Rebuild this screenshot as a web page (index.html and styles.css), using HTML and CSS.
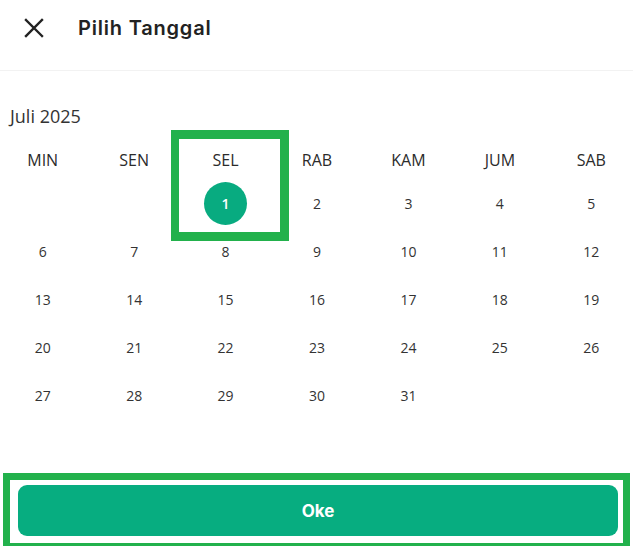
FILE: index.html
```html
<!DOCTYPE html>
<html lang="id">
<head>
<meta charset="utf-8">
<title>Pilih Tanggal</title>
<link rel="stylesheet" href="styles.css">
</head>
<body>
<div class="sheet">
  <header class="topbar">
    <button class="close" aria-label="Tutup">
      <svg width="20" height="20" viewBox="0 0 20 20"><path d="M2 2L18 18M18 2L2 18" stroke="#222" stroke-width="2.4" stroke-linecap="square" fill="none"/></svg>
    </button>
    <h1 class="title">Pilih Tanggal</h1>
  </header>
  <main class="cal">
    <div class="month">Juli 2025</div>
    <div class="grid">
      <div class="wd">MIN</div><div class="wd">SEN</div><div class="wd sel-col">SEL<span class="mark"></span></div><div class="wd">RAB</div><div class="wd">KAM</div><div class="wd">JUM</div><div class="wd">SAB</div>
      <div class="d"></div><div class="d"></div><div class="d"><span class="chosen">1</span></div><div class="d">2</div><div class="d">3</div><div class="d">4</div><div class="d">5</div>
      <div class="d">6</div><div class="d">7</div><div class="d">8</div><div class="d">9</div><div class="d">10</div><div class="d">11</div><div class="d">12</div>
      <div class="d">13</div><div class="d">14</div><div class="d">15</div><div class="d">16</div><div class="d">17</div><div class="d">18</div><div class="d">19</div>
      <div class="d">20</div><div class="d">21</div><div class="d">22</div><div class="d">23</div><div class="d">24</div><div class="d">25</div><div class="d">26</div>
      <div class="d">27</div><div class="d">28</div><div class="d">29</div><div class="d">30</div><div class="d">31</div><div class="d"></div><div class="d"></div>
    </div>
  </main>
  <footer class="foot">
    <span class="foot-mark"></span>
    <button class="ok">Oke</button>
  </footer>
</div>
</body>
</html>
```

FILE: styles.css
```css
* { box-sizing: border-box; }
html, body { margin: 0; padding: 0; background: #fff; }
body { width: 633px; height: 546px; overflow: hidden; }
.sheet { width: 633px; height: 546px; display: flex; flex-direction: column; }
.topbar {
  height: 71px;
  display: flex;
  align-items: center;
  padding: 0 0 14px 24px;
  border-bottom: 1px solid #f2f2f2;
}
.close {
  border: 0; background: none; padding: 0; margin: 0;
  width: 20px; height: 20px; display: block;
}
.close svg { display: block; }
.title {
  margin: 0 0 0 34px;
  font-family: Inter, "Noto Sans", sans-serif;
  font-size: 20px;
  font-weight: 600;
  color: #222;
  letter-spacing: 0.8px;
}
.cal { flex: 1; padding-top: 33px; }
.month {
  font-family: "Open Sans", "Noto Sans", sans-serif;
  font-size: 18px;
  color: #333;
  padding-left: 10px;
  line-height: 24px;
}
.grid {
  margin: 13px 0 0 -3px;
  width: 640px;
  display: grid;
  grid-template-columns: repeat(7, 1fr);
  grid-auto-rows: 48px;
  grid-template-rows: 38px;
  font-family: "Open Sans", "Noto Sans", sans-serif;
  color: #333;
}
.wd {
  font-size: 16px;
  display: flex; justify-content: center; align-items: center;
  position: relative;
  color: #2b2b2b;
}
.d {
  font-size: 14px;
  display: flex; justify-content: center; align-items: center;
}
.chosen {
  width: 43px; height: 43px; border-radius: 50%;
  background: #08ab80; color: #fff;
  display: flex; justify-content: center; align-items: center;
  font-weight: 600; font-size: 14px;
}
.mark {
  position: absolute;
  left: -9px;
  top: -11px;
  width: 118px; height: 111px;
  border: 9px solid #22b14c;
  border-left-width: 8px;
  pointer-events: none;
}
.foot {
  height: 73px;
  position: relative;
  padding: 12px 15px 10px 18px;
  display: flex;
}
.foot-mark {
  position: absolute;
  left: 3px; top: 0; width: 627px; height: 77px;
  border: 7px solid #22b14c;
}
.ok {
  flex: 1;
  height: 51px;
  border: 0;
  border-radius: 9px;
  background: #07ad80;
  color: #fff;
  font-family: Inter, "Noto Sans", sans-serif;
  font-weight: 700;
  font-size: 17px;
  padding: 0;
}
```
